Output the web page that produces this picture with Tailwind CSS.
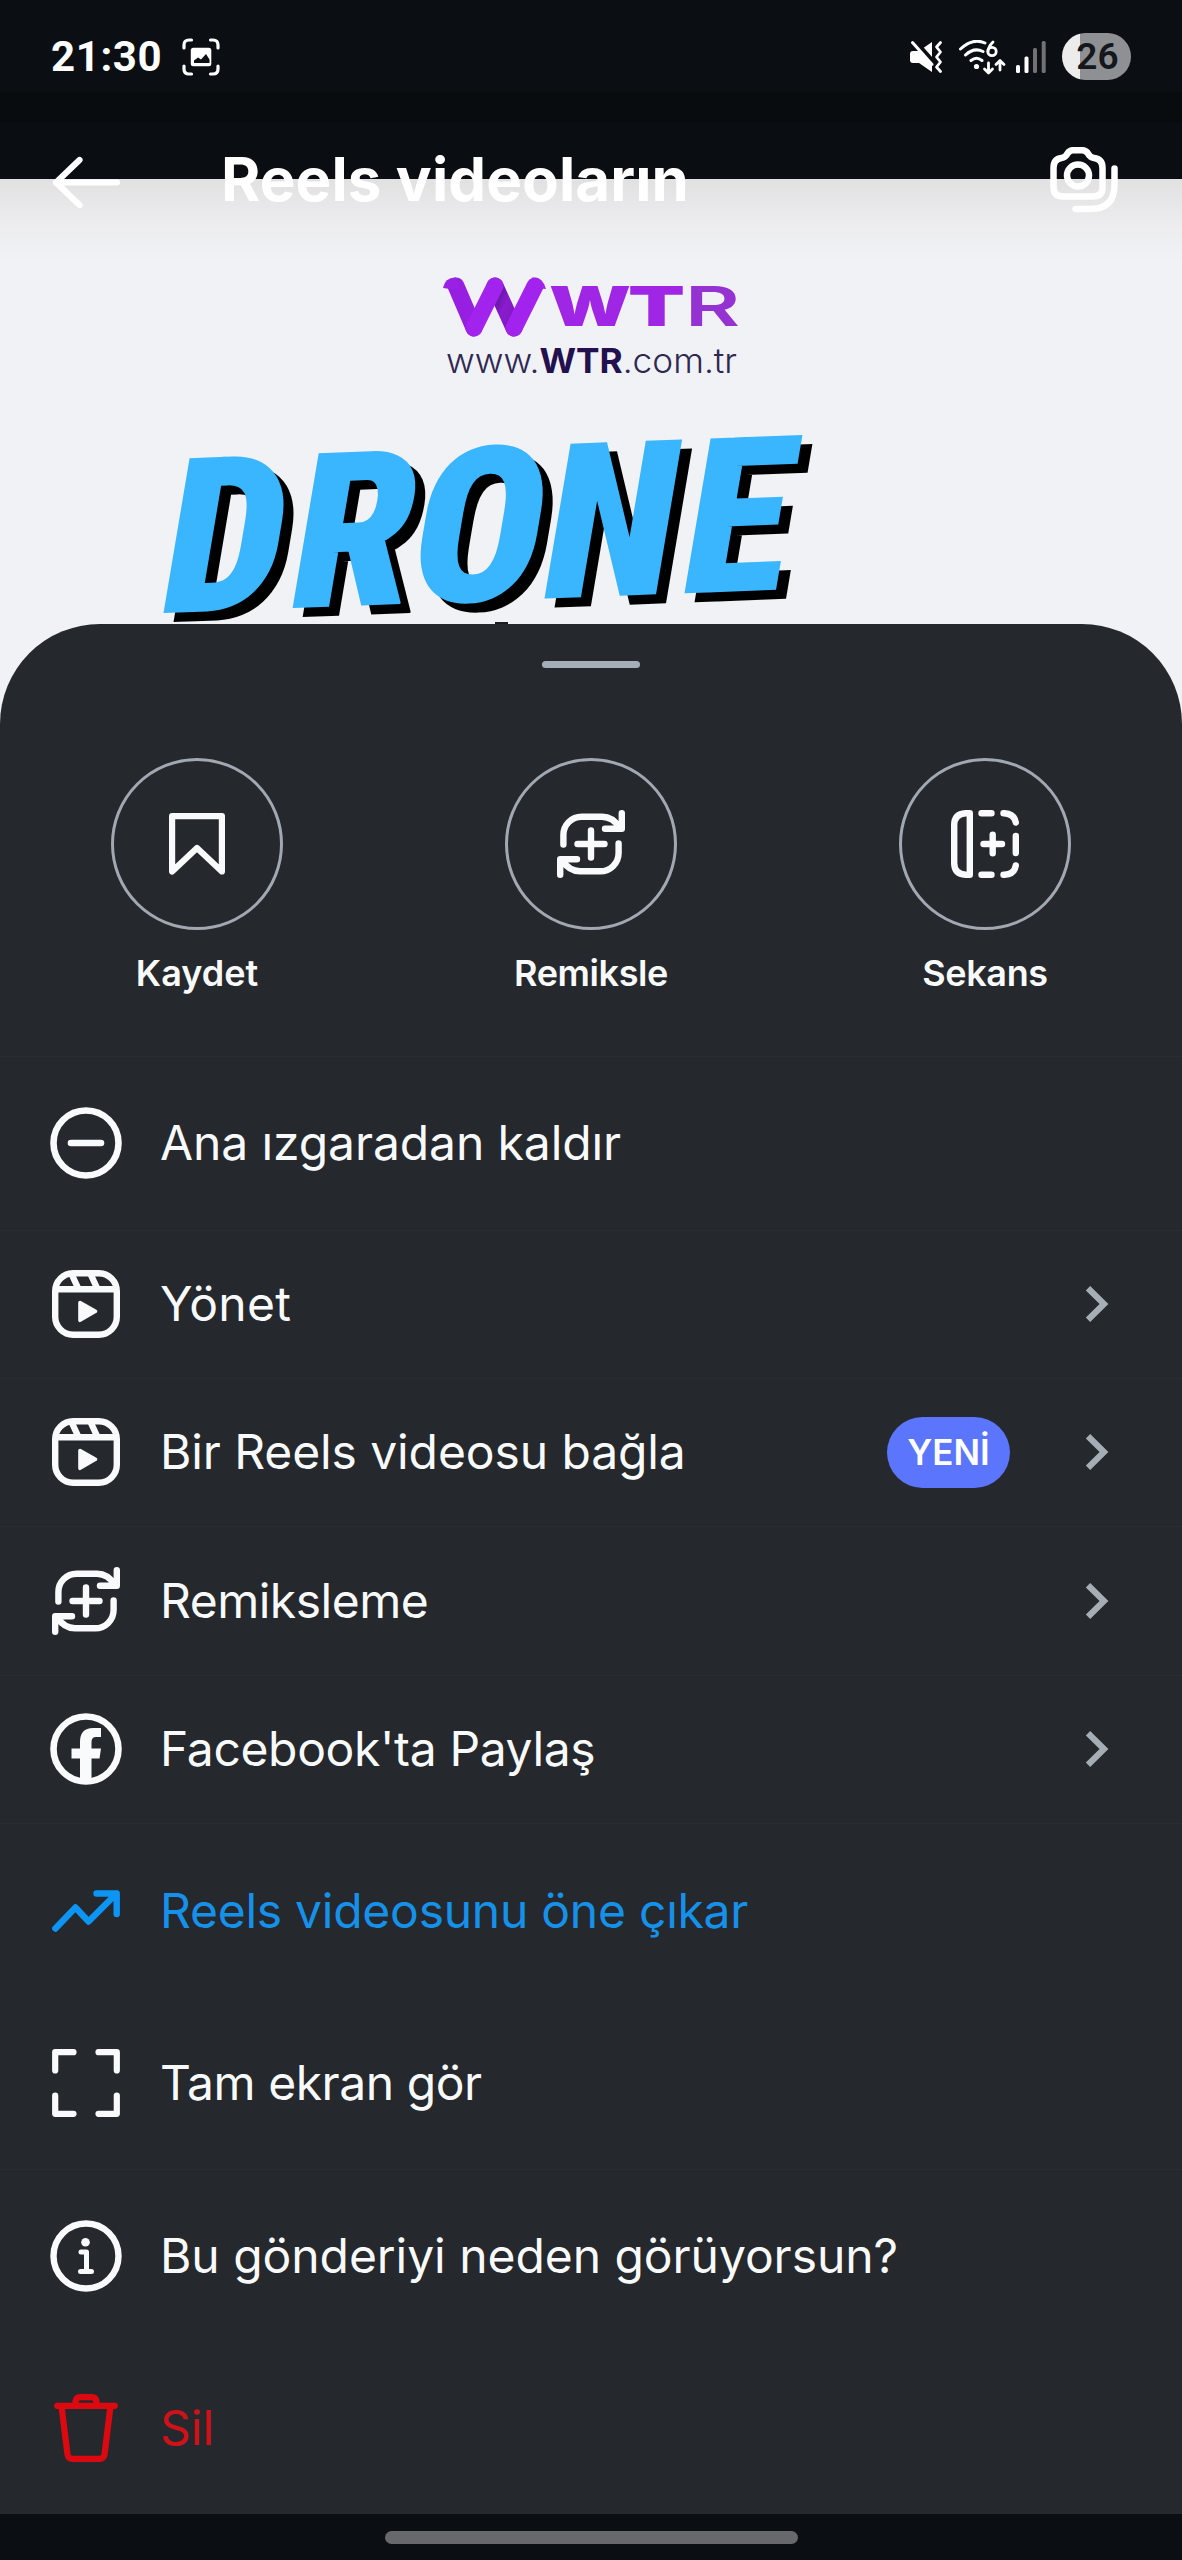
<!DOCTYPE html>
<html lang="tr">
<head>
<meta charset="utf-8">
<title>Reels videoların</title>
<script src="https://cdn.jsdelivr.net/npm/@tailwindcss/browser@4"></script>
</head>
<body class="bg-[#0b0e13]">
<svg class="hidden">
  <symbol id="remix" viewBox="0 0 68 68">
    <g fill="none" stroke="currentColor" stroke-width="6.4" stroke-linecap="round" stroke-linejoin="round">
      <path d="M6.4 34.5V25A18.3 18.3 0 0 1 24.7 6.7H45Q56 7 62 17M48 18.8H64.8V3.2"/>
      <path d="M61.6 33.500V43A18.300 18.300 0 0 1 43.300 61.300H23Q12 61 6 51M20 49.200H3.200V64.800"/>
      <path d="M20.500 34H47.500M34 20.500V47.500"/>
    </g>
  </symbol>
  <symbol id="reels" viewBox="0 0 68 68">
    <g fill="none" stroke="currentColor" stroke-width="6.400" stroke-linejoin="round">
      <rect x="3.200" y="3.200" width="61.600" height="61.600" rx="18"/>
      <path d="M3.200 19.300H64.800M19.500 4L26.500 19M38.500 4L45.500 19"/>
    </g>
    <path d="M28 32.500L43.500 41.300L28 50.300Z" fill="currentColor" stroke="currentColor" stroke-width="3.600" stroke-linejoin="round"/>
  </symbol>
  <symbol id="chev" viewBox="0 0 24 38">
    <path d="M3 3.200L19 19L3 34.800" fill="none" stroke="currentColor" stroke-width="6.200"/>
  </symbol>
</svg>
<div class="relative flex h-[2560px] w-[1182px] flex-col overflow-hidden bg-[#0b0e13] font-[Inter,sans-serif] text-[#f9fafb]">

  <!-- status bar -->
  <div class="flex h-[92px] items-start pl-[51px] pr-[51px] pt-[33px] font-[Roboto,sans-serif] text-white">
    <span class="w-[131px] whitespace-nowrap pt-px text-[42px] font-bold leading-[46px] tracking-[0.6px]">21:30</span>
    <svg class="mt-[5px] h-[38px] w-[38px]" viewBox="0 0 38 38" fill="none" stroke="currentColor" stroke-width="3.200" stroke-linecap="round">
      <path d="M2 10V7Q2 2 7 2H9.500M28.500 2H31Q36 2 36 7V10M36 28V31Q36 36 31 36H28.500M9.500 36H7Q2 36 2 31V28"/>
      <rect x="8.800" y="9.800" width="20.500" height="18.500" rx="2.500" fill="currentColor" stroke="none"/>
      <path d="M12 25V22.500L16 19.500L19 21.500L24 16L27.500 21.500V25Z" fill="#0b0e13" stroke="none"/>
    </svg>
    <div class="ml-auto flex items-start">
      <svg class="mt-[7px] h-[34px] w-[34px]" viewBox="0 0 34 34">
        <path d="M0 14Q0 11 3 11H9L22 2V32L9 23H3Q0 23 0 20Z" fill="currentColor"/>
        <path d="M1 -3L24 23" stroke="#0b0e13" stroke-width="5"/>
        <path d="M2.500 2.500L22 24.500" stroke="currentColor" stroke-width="3" stroke-linecap="round"/>
        <path d="M30.500 2.500L26.500 7L30.500 12L26.500 17L30.500 22L26.500 27L30.500 31.500" fill="none" stroke="currentColor" stroke-width="2.800" stroke-linecap="round" stroke-linejoin="round"/>
      </svg>
      <svg class="ml-[15px] mt-[7px] h-[35px] w-[47px]" viewBox="0 0 47 35" fill="none" stroke="currentColor" stroke-width="3" stroke-linecap="round">
        <path d="M1.500 9Q14 -2.500 26 3M6.500 15Q15 7 24 11.500M12 20.500Q17.500 16 23 20.500"/>
        <circle cx="17.500" cy="26.500" r="2.600" fill="currentColor" stroke="none"/>
        <path d="M34 2Q29 7 29 11.500" stroke-width="2.800"/>
        <circle cx="33" cy="11.500" r="4.200" stroke-width="2.800"/>
        <path d="M29.500 23V32M25.500 29L29.500 33L33.500 29M41 30V21M37 24.500L41 20.500L45 24.500" stroke-width="2.800" stroke-linejoin="round"/>
      </svg>
      <svg class="ml-[10px] mt-[8px] h-[32px] w-[30px]" viewBox="0 0 30 32" fill="currentColor">
        <rect x="0" y="24" width="4" height="8" rx="1.500"/>
        <rect x="8.500" y="15.500" width="4" height="16.500" rx="1.500"/>
        <g class="text-[#707276]"><rect x="17" y="7" width="4" height="25" rx="1.500"/><rect x="25.700" y="0" width="4" height="32" rx="1.500"/></g>
      </svg>
      <div class="ml-[16px] flex h-[47px] w-[69px] items-center justify-center rounded-full bg-linear-to-r from-[#ececed] from-[26%] to-[#8f9093] to-[26%] pl-[2px] text-[37px] font-semibold leading-[47px] text-[#14171b]">26</div>
    </div>
  </div>

  <!-- app header, overlapping the edge of the video -->
  <div class="h-[87px] bg-linear-to-b from-[#080c0e] from-[36%] to-[#0a0d12] to-[36%]"></div>
  <div class="relative h-[2381px] bg-linear-to-b from-[#e1e1e2] via-[#ededef] via-[47px] to-[#f0f2f5] to-[85px]"></div>
  <div class="absolute left-0 top-[140px] flex h-[80px] w-full items-center pl-[52px] pr-[64px] text-white">
    <svg class="mt-[3px] h-[52px] w-[68px]" viewBox="0 0 68 52" fill="none" stroke="currentColor" stroke-width="6.200" stroke-linecap="round" stroke-linejoin="round"><path d="M27.500 4L4 26.500L27.500 49M4 26.500H65"/></svg>
    <h1 class="-mt-[3px] ml-[101px] whitespace-nowrap text-[60px] font-bold leading-[76px] tracking-[0.1px]">Reels videoların</h1>
    <svg class="ml-auto h-[66px] w-[68px]" viewBox="0 0 68 66" fill="none" stroke="currentColor" stroke-width="6.500" stroke-linecap="round" stroke-linejoin="round">
      <path d="M3.500 21Q3.500 12 11.500 11Q15.500 10.500 17.500 6.500Q19.500 3.200 23 3.200H32Q36 3.200 38 6.500Q40 10.500 44 11Q52.500 12 52.500 21V40Q52.500 49.500 43 49.500H13Q3.500 49.500 3.500 40Z"/>
      <circle cx="28" cy="28.500" r="11"/>
      <path d="M64.500 21.500V38Q64.500 62 40 62H25.500"/>
    </svg>
  </div>

  <!-- video frame artwork -->
  <svg class="absolute left-0 top-[240px] h-[500px] w-full" viewBox="0 240 1182 500">
    <defs>
      <linearGradient id="fold" x1="0" y1="0" x2="1" y2="1"><stop offset="0" stop-color="#521389"/><stop offset=".5" stop-color="#8a1ccf"/><stop offset="1" stop-color="#7a19ba"/></linearGradient>
    </defs>
    <g fill="none" stroke-width="17" stroke-linecap="round" stroke-linejoin="round">
      <path d="M456 286L474 328" stroke="#961fe2"/>
      <path d="M495 286L514 328" stroke="url(#fold)"/>
      <path d="M474 328L495 286M514 328L535 286" stroke="#a222ee"/>
    </g>
    <path d="M443 288Q445 277 456 277.500L460 288L450 289Z" fill="#9a20e4"/>
    <path d="M532 277.500Q543 277 546 289L535 288Z" fill="#a222ee"/>
    <g fill="#a026e6" font-family="Inter" font-size="55">
      <text x="549" y="326" font-weight="900" textLength="82" lengthAdjust="spacingAndGlyphs">W</text>
      <text x="628" y="326" font-weight="900" textLength="57" lengthAdjust="spacingAndGlyphs">T</text>
      <text x="685" y="326" font-weight="600" fill="#9432d2" textLength="55" lengthAdjust="spacingAndGlyphs">R</text>
    </g>
    <text x="446" y="373" font-family="Inter" font-size="34" font-weight="300" fill="#2f2852" textLength="291" lengthAdjust="spacingAndGlyphs">www.<tspan font-weight="700" fill="#22104f">WTR</tspan>.com.tr</text>
    <g class="[font-stretch:75%]" font-family="Roboto" font-weight="900" font-size="218">
      <text transform="matrix(1 -.038 -.168 1 175 622)" x="-12 117 238 369 509" fill="#000">DRONE</text>
      <text transform="matrix(1 -.038 -.168 1 165 613)" x="-12 117 238 369 509" fill="#3ab5ff">DRONE</text>
    </g>
    <rect x="495" y="622" width="13" height="6" fill="#1a1c20"/>
  </svg>

  <!-- bottom sheet -->
  <div class="absolute left-0 top-[624px] flex h-[1890px] w-full flex-col rounded-t-[100px] bg-[#25282d]">
    <div class="mx-auto mt-[37px] h-[7px] w-[98px] rounded-full bg-[#a5adb8]"></div>
    <div class="mt-[90px] grid h-[299px] grid-cols-3 border-b border-[#2a2d32] text-center text-[36px] font-semibold leading-[44px]">
      <div class="flex flex-col items-center">
        <div class="flex h-[172px] w-[172px] items-center justify-center rounded-full border-[3px] border-[#a2a8b1]">
          <svg class="h-[62px] w-[56px]" viewBox="0 0 56 62" fill="none" stroke="currentColor" stroke-width="6.200" stroke-linejoin="round"><path d="M3.100 3.100H52.900V58.500L28 35L3.100 58.500Z"/></svg>
        </div>
        <span class="mt-[21px]">Kaydet</span>
      </div>
      <div class="flex flex-col items-center">
        <div class="flex h-[172px] w-[172px] items-center justify-center rounded-full border-[3px] border-[#a2a8b1]">
          <svg class="h-[68px] w-[68px]"><use href="#remix"/></svg>
        </div>
        <span class="mt-[21px] tracking-[-0.4px]">Remiksle</span>
      </div>
      <div class="flex flex-col items-center">
        <div class="flex h-[172px] w-[172px] items-center justify-center rounded-full border-[3px] border-[#a2a8b1]">
          <svg class="h-[68px] w-[68px]" viewBox="0 0 68 68" fill="none" stroke="currentColor" stroke-width="6.400" stroke-linecap="round" stroke-linejoin="round">
            <path d="M18.800 3.200V64.800H14.500Q3.200 64 3.200 53V15Q3.200 4 14.500 3.200ZM30.500 3.200H40.500M30.500 64.800H40.500M52.500 3.200H53.500Q63.500 4 64.800 12.500M52.500 64.800H53.500Q63.500 64 64.800 55.500M64.800 26V43M32.500 34H51M41.700 24.700V43.300"/>
          </svg>
        </div>
        <span class="mt-[21px] tracking-[-0.4px]">Sekans</span>
      </div>
    </div>

    <ul class="flex flex-col text-[48px] leading-[60px] [&>li]:flex [&>li]:items-center [&>li]:gap-[38px] [&>li]:pb-px [&>li]:pl-[50px] [&>li]:pr-[73px]">
      <li class="h-[174px] border-b border-[#2a2d32]">
        <svg class="h-[72px] w-[72px]" viewBox="0 0 72 72" fill="none" stroke="currentColor" stroke-width="6.600" stroke-linecap="round"><circle cx="36" cy="36" r="32.500"/><path d="M21 36H51"/></svg>
        <span class="tracking-[-0.1px]">Ana ızgaradan kaldır</span>
      </li>
      <li class="h-[148px] border-b border-[#2a2d32]">
        <svg class="mx-[2px] h-[68px] w-[68px]"><use href="#reels"/></svg>
        <span class="tracking-[0.3px]">Yönet</span>
        <svg class="ml-auto h-[38px] w-[24px] text-[#a5adb5]"><use href="#chev"/></svg>
      </li>
      <li class="h-[148px] border-b border-[#2a2d32]">
        <svg class="mx-[2px] h-[68px] w-[68px]"><use href="#reels"/></svg>
        <span class="tracking-[-0.1px]">Bir Reels videosu bağla</span>
        <span class="ml-auto mr-[37px] flex h-[71px] w-[123px] items-center justify-center rounded-full bg-[#5b75fd] text-[35px] font-semibold text-white">YENİ</span>
        <svg class="h-[38px] w-[24px] text-[#a5adb5]"><use href="#chev"/></svg>
      </li>
      <li class="h-[149px] border-b border-[#2a2d32]">
        <svg class="mx-[2px] h-[68px] w-[68px]"><use href="#remix"/></svg>
        <span class="tracking-[-0.5px]">Remiksleme</span>
        <svg class="ml-auto h-[38px] w-[24px] text-[#a5adb5]"><use href="#chev"/></svg>
      </li>
      <li class="h-[148px] border-b border-[#2a2d32]">
        <svg class="h-[72px] w-[72px]" viewBox="0 0 72 72"><circle cx="36" cy="36" r="32.500" fill="none" stroke="currentColor" stroke-width="6.600"/><path d="M30 69V45.500H21.500V35.500H30V29Q30 15 43 15H51V24H46Q41.500 24 41.500 29V35.500H51L49.500 45.500H41.500V69Z" fill="currentColor"/></svg>
        <span class="tracking-[-0.35px]">Facebook'ta Paylaş</span>
        <svg class="ml-auto h-[38px] w-[24px] text-[#a5adb5]"><use href="#chev"/></svg>
      </li>
      <li class="h-[174px] text-[#1691ea]">
        <svg class="mx-[2px] h-[42px] w-[68px]" viewBox="0 0 68 42" fill="none" stroke="#0d95f6" stroke-width="6.400" stroke-linecap="round" stroke-linejoin="round"><path d="M3.400 38.500L23.500 17.500L36.500 31.500L64.500 3.500M44.500 3.500H64.700V24"/></svg>
        <span class="tracking-[-0.25px]">Reels videosunu öne çıkar</span>
      </li>
      <li class="h-[172px] border-b border-[#2a2d32]">
        <svg class="mx-[2px] h-[68px] w-[68px]" viewBox="0 0 68 68" fill="none" stroke="currentColor" stroke-width="6.200" stroke-linecap="round" stroke-linejoin="round"><path d="M3.200 21.500V3.200H21.500M46.500 3.200H64.800V21.500M64.800 46.500V64.800H46.500M21.500 64.800H3.200V46.500"/></svg>
        <span class="tracking-[-0.45px]">Tam ekran gör</span>
      </li>
      <li class="h-[172px]">
        <svg class="h-[72px] w-[72px]" viewBox="0 0 72 72" fill="none" stroke="currentColor" stroke-width="6.400" stroke-linecap="round" stroke-linejoin="round"><circle cx="36" cy="36" r="32.500"/><circle cx="35.500" cy="22.300" r="4.300" fill="currentColor" stroke="none"/><path stroke-width="5" d="M31 32H36.500V51M30.500 51.500H41.500"/></svg>
        <span class="tracking-[-0.05px]">Bu gönderiyi neden görüyorsun?</span>
      </li>
      <li class="h-[172px] text-[#cd1219]">
        <svg class="mx-[4px] h-[68px] w-[64px]" viewBox="0 0 64 68" fill="none" stroke="#dc0a10" stroke-width="6.200" stroke-linecap="round" stroke-linejoin="round"><path d="M3.200 11.800H60.800M21.500 11V7.500Q22 3.200 26.500 3.200H37.500Q42 3.200 42.500 7.500V11M7.500 12L13.500 60.500Q14.200 64.800 18.500 64.800H45.500Q49.800 64.800 50.500 60.500L56.500 12"/></svg>
        <span>Sil</span>
      </li>
    </ul>
  </div>

  <!-- system navigation handle -->
  <div class="absolute left-0 top-[2514px] flex h-[46px] w-full items-start justify-center bg-[#0b0e13] pt-[17px]">
    <div class="h-[13px] w-[413px] rounded-full bg-[#67686b]"></div>
  </div>
</div>
</body>
</html>
